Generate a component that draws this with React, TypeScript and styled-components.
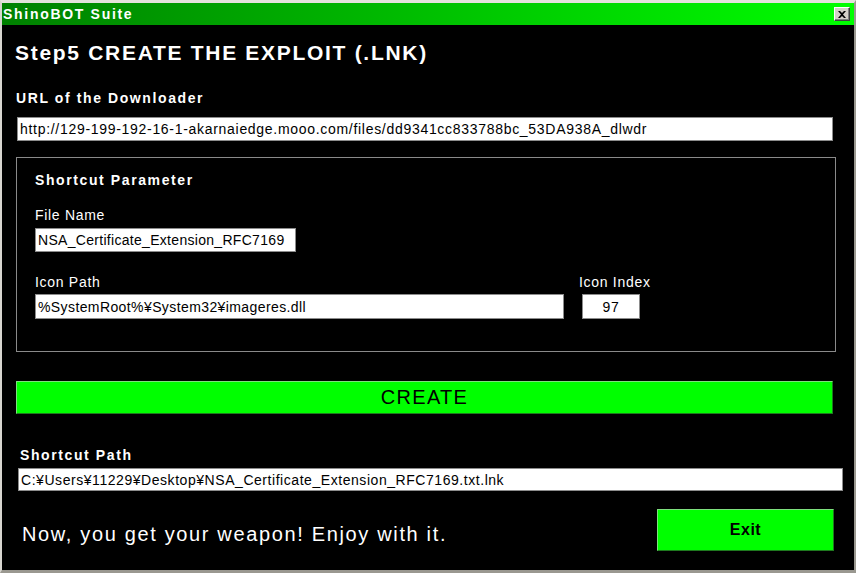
import React, { FC } from "react";
import styled, { createGlobalStyle } from "styled-components";

const FONT = `"Liberation Sans", Arial, sans-serif`;

const GlobalStyle = createGlobalStyle`
	html, body {
		margin: 0;
		padding: 0;
		background: #000;
	}
	* {
		box-sizing: border-box;
	}
`;

interface BoxProps {
	$width: number;
	$height?: number;
	$top?: number;
	$left?: number;
	$center?: boolean;
	$spacing?: number;
}

interface LabelProps {
	$bold?: boolean;
	$top?: number;
	$left?: number;
}

const App: FC = () => {
	return (
		<>
			<GlobalStyle />
			<Window>
				<TitleBar>
					<TitleText>ShinoBOT Suite</TitleText>
					<CloseButton aria-label="close">
						<svg width="8" height="7" viewBox="0 0 8 7">
							<path d="M0 0h2l2 2 2-2h2L5 3.5 8 7H6L4 5 2 7H0l3-3.5z" fill="#000" />
						</svg>
					</CloseButton>
				</TitleBar>
				<Body>
					<Heading>Step5 CREATE THE EXPLOIT (.LNK)</Heading>
					<Label $bold $top={25}>
						URL of the Downloader
					</Label>
					<TextBox $width={816} $top={11} $left={1}>
						http://129-199-192-16-1-akarnaiedge.mooo.com/files/dd9341cc833788bc_53DA938A_dlwdr
					</TextBox>
					<GroupBox>
						<Label $bold>Shortcut Parameter</Label>
						<Label $top={19}>File Name</Label>
						<TextBox $width={261} $top={5} $spacing={0.3}>
							NSA_Certificate_Extension_RFC7169
						</TextBox>
						<FieldRow>
							<Field>
								<Label>Icon Path</Label>
								<TextBox $width={529} $height={25} $top={4} $spacing={0.4}>
									%SystemRoot%¥System32¥imageres.dll
								</TextBox>
							</Field>
							<Field>
								<Label>Icon Index</Label>
								<TextBox $width={58} $height={25} $top={4} $left={3} $center>
									97
								</TextBox>
							</Field>
						</FieldRow>
					</GroupBox>
					<CreateButton>CREATE</CreateButton>
					<Label $bold $top={33} $left={4}>
						Shortcut Path
					</Label>
					<TextBox $width={825} $height={23} $top={5} $left={2} $spacing={0.55}>
						C:¥Users¥11229¥Desktop¥NSA_Certificate_Extension_RFC7169.txt.lnk
					</TextBox>
					<Footer>
						<Message>Now, you get your weapon! Enjoy with it.</Message>
						<ExitButton>Exit</ExitButton>
					</Footer>
				</Body>
			</Window>
		</>
	);
};

const Window = styled.div`
	width: 856px;
	height: 573px;
	display: flex;
	flex-direction: column;
	background: #000;
	border-style: solid;
	border-width: 3px 2px 3px 2px;
	border-color: #e4e2dc #9a9890 #9a9890 #d8d6d0;
`;

const TitleBar = styled.div`
	height: 22px;
	flex: none;
	display: flex;
	align-items: center;
	justify-content: space-between;
	padding: 0 4px 0 1px;
	background: linear-gradient(to right, #008000, #00ff00);
`;

const TitleText = styled.span`
	color: #fff;
	font-family: ${FONT};
	font-weight: bold;
	font-size: 14px;
	letter-spacing: 1.7px;
`;

const CloseButton = styled.div`
	width: 16px;
	height: 14px;
	display: flex;
	align-items: center;
	justify-content: center;
	background: #d4d0c8;
	border-style: solid;
	border-width: 1px;
	border-color: #fff #404040 #404040 #fff;
	box-shadow: inset -1px -1px 0 #808080;
`;

const Body = styled.div`
	flex: 1;
	display: flex;
	flex-direction: column;
	align-items: flex-start;
	padding: 0 0 0 14px;
	color: #fff;
	font-family: ${FONT};
`;

const Heading = styled.h1`
	margin: 16px 0 0 -1px;
	font-size: 21px;
	line-height: 24px;
	font-weight: bold;
	letter-spacing: 1.7px;
	color: #fff;
`;

const Label = styled.div<LabelProps>`
	margin-top: ${(p) => p.$top ?? 0}px;
	margin-left: ${(p) => p.$left ?? 0}px;
	font-size: 14px;
	line-height: 16px;
	font-weight: ${(p) => (p.$bold ? "bold" : "normal")};
	letter-spacing: ${(p) => (p.$bold ? "1.6px" : "0.7px")};
	color: #fff;
	white-space: nowrap;
`;

const TextBox = styled.div<BoxProps>`
	width: ${(p) => p.$width}px;
	height: ${(p) => p.$height ?? 24}px;
	margin-top: ${(p) => p.$top ?? 0}px;
	margin-left: ${(p) => p.$left ?? 0}px;
	display: flex;
	align-items: center;
	justify-content: ${(p) => (p.$center ? "center" : "flex-start")};
	padding: 0 2px;
	background: #fff;
	border: 1px solid #8c8c8c;
	color: #000;
	font-family: ${FONT};
	font-size: 14px;
	letter-spacing: ${(p) => p.$spacing ?? 0.7}px;
	white-space: nowrap;
	overflow: hidden;
`;

const GroupBox = styled.div`
	width: 820px;
	height: 195px;
	margin-top: 16px;
	padding: 14px 0 0 18px;
	border: 1px solid #8a8a8a;
`;

const FieldRow = styled.div`
	display: flex;
	gap: 15px;
	margin-top: 22px;
`;

const Field = styled.div`
	display: flex;
	flex-direction: column;
`;

const GreenButton = styled.div`
	display: flex;
	align-items: center;
	justify-content: center;
	background: #00ff00;
	border-style: solid;
	border-width: 1px;
	border-color: #7ee07e #1f7a1f #1f7a1f #7ee07e;
	color: #000;
	font-family: ${FONT};
`;

const CreateButton = styled(GreenButton)`
	width: 817px;
	height: 33px;
	margin-top: 29px;
	font-size: 20px;
	letter-spacing: 1.3px;
`;

const Footer = styled.div`
	width: 818px;
	margin-top: 18px;
	display: flex;
	align-items: center;
	justify-content: space-between;
`;

const Message = styled.div`
	margin: 8px 0 0 6px;
	font-size: 20px;
	letter-spacing: 1.65px;
	color: #fff;
`;

const ExitButton = styled(GreenButton)`
	width: 177px;
	height: 42px;
	font-size: 16px;
	font-weight: bold;
	letter-spacing: 0.5px;
`;

export default App;
